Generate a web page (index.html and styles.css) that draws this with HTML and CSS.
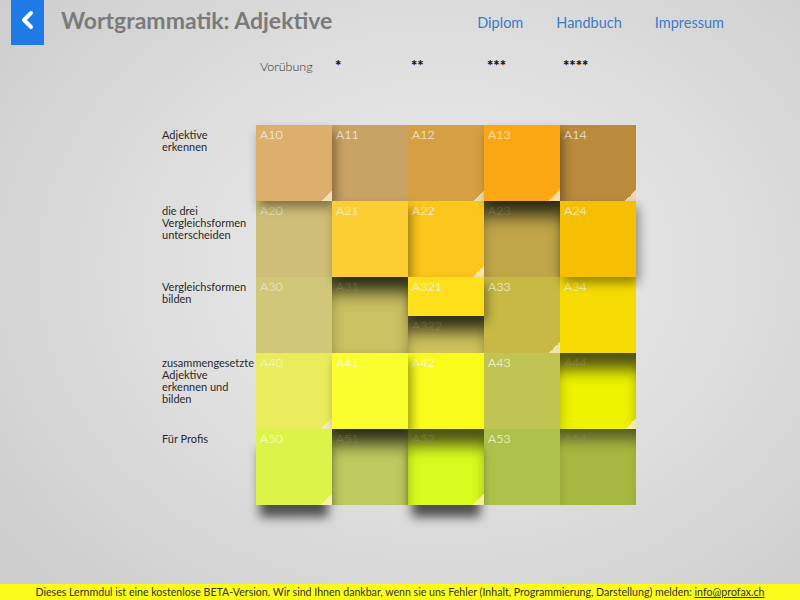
FILE: index.html
```html
<!DOCTYPE html>
<html lang="de">
<head>
<meta charset="utf-8">
<title>Wortgrammatik: Adjektive</title>
<link rel="stylesheet" href="styles.css">
</head>
<body>
<header class="topbar">
  <a class="back" href="#" aria-label="Zurück">
    <svg width="14" height="20" viewBox="0 0 14 20"><polyline points="10,3 3,10 10,17" fill="none" stroke="#fff" stroke-width="4" stroke-linecap="round" stroke-linejoin="round"/></svg>
  </a>
  <h1 class="title">Wortgrammatik: Adjektive</h1>
  <nav class="nav">
    <a href="#">Diplom</a>
    <a href="#">Handbuch</a>
    <a href="#">Impressum</a>
  </nav>
</header>

<main class="board">
  <div class="levels">
    <span></span>
    <span class="level">Vorübung</span>
    <span class="level star">*</span>
    <span class="level star">**</span>
    <span class="level star">***</span>
    <span class="level star">****</span>
  </div>

  <div class="matrix">
    <div class="topic">Adjektive<br>erkennen</div>
    <a class="tile raised fold" style="background:#dcb06c">A10</a>
    <a class="tile" style="background:#c9a365">A11</a>
    <a class="tile fold" style="background:#d5a042">A12</a>
    <a class="tile raised fold" style="background:#fba613">A13</a>
    <a class="tile fold" style="background:#bb8b3d">A14</a>

    <div class="topic">die drei<br>Vergleichsformen<br>unterscheiden</div>
    <a class="tile faded" style="background:#cfbe78">A20</a>
    <a class="tile raised" style="background:#fdce33">A21</a>
    <a class="tile fold" style="background:#fcc71c">A22</a>
    <a class="tile dim" style="background:#c1a64a">A23</a>
    <a class="tile raised" style="background:#f5bf02">A24</a>

    <div class="topic">Vergleichsformen<br>bilden</div>
    <a class="tile faded" style="background:#d0c778">A30</a>
    <a class="tile dim" style="background:#cbc062">A31</a>
    <div class="split">
      <a class="tile half raised" style="background:#fde01b">A321</a>
      <a class="tile half dim" style="background:#cfc25d">A322</a>
    </div>
    <a class="tile fold" style="background:#c8b844">A33</a>
    <a class="tile" style="background:#f6dc02">A34</a>

    <div class="topic">zusammengesetzte<br>Adjektive<br>erkennen und<br>bilden</div>
    <a class="tile faded fold" style="background:#e9ed5c">A40</a>
    <a class="tile raised" style="background:#fafd2e">A41</a>
    <a class="tile" style="background:#f9fc1a">A42</a>
    <a class="tile" style="background:#c0c452">A43</a>
    <a class="tile dim fold" style="background:#eef300">A44</a>

    <div class="topic">Für Profis</div>
    <a class="tile raised drop fold" style="background:#dcf44a">A50</a>
    <a class="tile dim" style="background:#bfcb60">A51</a>
    <a class="tile dim drop fold" style="background:#d8fc1e">A52</a>
    <a class="tile" style="background:#aec24b">A53</a>
    <a class="tile dim flat" style="background:#a6b83f">A54</a>
  </div>
</main>

<footer class="notice">
  Dieses Lernmdul ist eine kostenlose BETA-Version. Wir sind Ihnen dankbar, wenn sie uns Fehler (Inhalt, Programmierung, Darstellung) melden: <a href="#">info@profax.ch</a>
</footer>
</body>
</html>
```
FILE: styles.css
```css
* { box-sizing: border-box; }

html, body { height: 100%; }

body {
  margin: 0;
  height: 600px;
  display: flex;
  flex-direction: column;
  font-family: Lato, "Open Sans", sans-serif;
  color: #333;
  background: radial-gradient(ellipse 70% 75% at 55% 45%, #ececec 0%, #e0e0e0 45%, #cdcdcd 100%);
  overflow: hidden;
}

/* top bar */
.topbar {
  height: 45px;
  display: flex;
  align-items: center;
}

.back {
  margin-left: 11px;
  width: 33px;
  height: 45px;
  background: #1f7ae6;
  display: flex;
  align-items: center;
  justify-content: center;
  padding-bottom: 6px;
}

.title {
  margin: 0 0 6px 17px;
  font-size: 23px;
  font-weight: 700;
  color: #7b7b7b;
}

.nav {
  margin-left: auto;
  padding-right: 76px;
  display: flex;
  gap: 33px;
}

.nav a {
  font-size: 14.5px;
  color: #3a7cc9;
  text-decoration: none;
}

/* level header + matrix */
.board {
  padding-left: 162px;
}

.levels,
.matrix {
  display: grid;
  grid-template-columns: 94px repeat(5, 76px);
}

.levels {
  margin-top: 14px;
  height: 14px;
  align-items: center;
}

.level {
  padding-left: 4px;
  font-size: 12.5px;
  font-weight: 300;
  color: #333;
}

.star {
  font-weight: 900;
  color: #111;
  font-size: 15px;
  line-height: 8px;
  padding-left: 3px;
  padding-bottom: 4px;
}

.matrix {
  margin-top: 52px;
  grid-auto-rows: 76px;
}

.topic {
  padding-top: 4px;
  font-size: 11px;
  font-weight: 400;
  line-height: 12px;
  color: #2a2a2a;
}

.tile {
  position: relative;
  display: block;
  padding: 3px 0 0 4px;
  font-size: 12.5px;
  font-weight: 300;
  line-height: 14px;
  color: #fff;
  text-decoration: none;
}

.split {
  display: flex;
  flex-direction: column;
}

.half {
  height: 39px;
  flex: none;
}

.half + .half {
  height: 37px;
}

.raised {
  z-index: 2;
  box-shadow: 3px 6px 10px rgba(0, 0, 0, 0.4);
}

.drop {
  z-index: 3;
  box-shadow: 0 16px 10px -4px rgba(0, 0, 0, 0.65);
}

.faded { color: rgba(255, 255, 255, 0.75); }

.dim {
  color: rgba(150, 145, 120, 0.7);
  box-shadow: inset 0 22px 16px -6px rgba(40, 40, 20, 0.8);
}

.dim.drop {
  box-shadow: inset 0 22px 16px -6px rgba(40, 40, 20, 0.8), 0 16px 10px -4px rgba(0, 0, 0, 0.65);
}

.flat { box-shadow: inset 0 18px 14px -8px rgba(40, 40, 20, 0.65); }

/* folded corner at the lower right of a tile */
.fold::after {
  content: "";
  position: absolute;
  right: 0;
  bottom: 0;
  width: 11px;
  height: 11px;
  background: linear-gradient(to top left, rgba(255, 240, 210, 0.75) 50%, transparent 50%);
}

/* notice bar */
.notice {
  margin-top: auto;
  height: 16px;
  background: #fcfc1c;
  font-size: 10.6px;
  line-height: 16px;
  text-align: center;
  color: #333;
}

.notice a {
  color: #333;
}
```
